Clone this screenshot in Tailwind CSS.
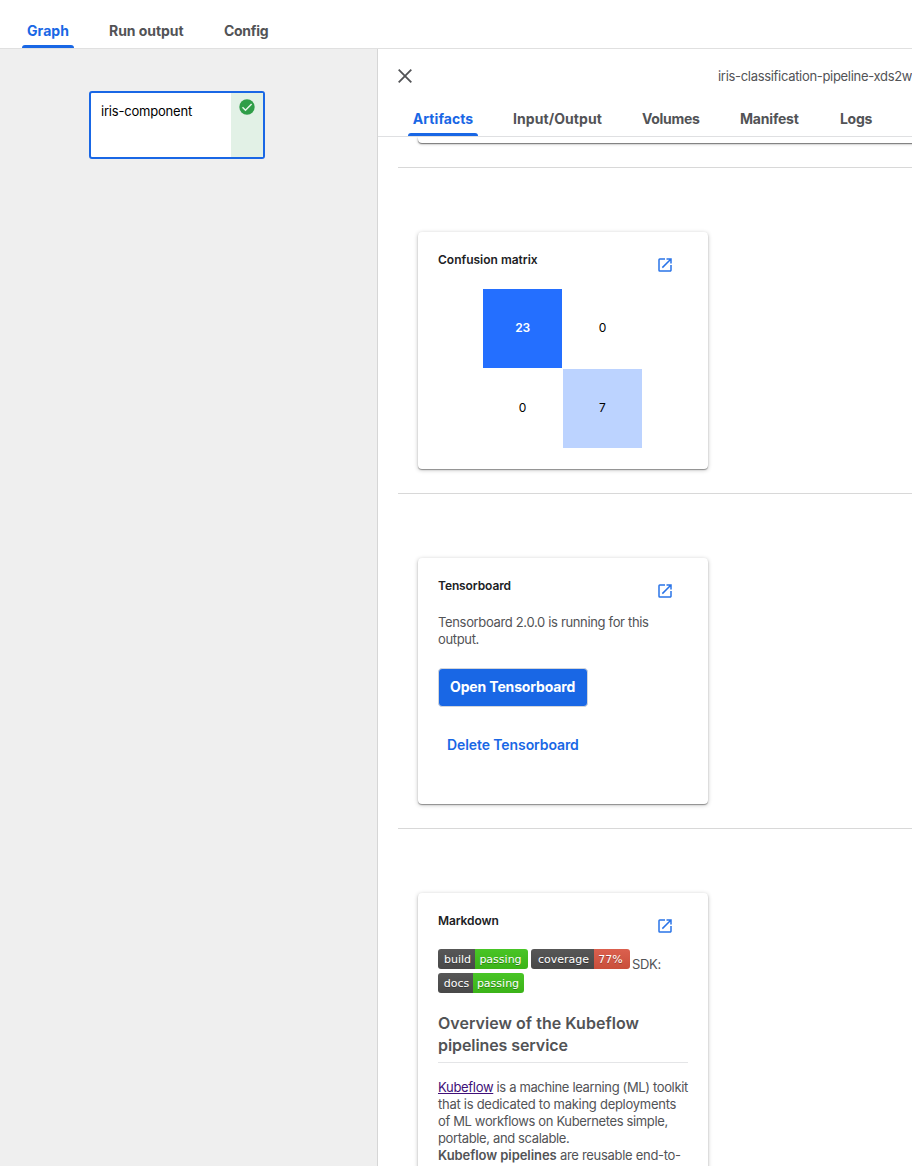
<!DOCTYPE html>
<html lang="en">
<head>
<meta charset="utf-8">
<title>Run details</title>
<script src="https://cdn.jsdelivr.net/npm/@tailwindcss/browser@4"></script>
</head>
<body class="w-[912px] h-[1166px] overflow-hidden bg-white font-['Inter','Liberation_Sans',sans-serif] text-[#525356] whitespace-nowrap flex flex-col">
<svg class="hidden">
  <symbol id="launch" viewBox="0 0 24 24"><path fill="currentColor" d="M19 19H5V5h7V3H5a2 2 0 0 0-2 2v14a2 2 0 0 0 2 2h14c1.1 0 2-.9 2-2v-7h-2v7zM14 3v2h3.59l-9.83 9.83 1.41 1.41L19 6.41V10h2V3h-7z"/></symbol>
</svg>
<header class="h-[49px] shrink-0 border-b border-[#e0e0e0] flex items-end pl-[22px] text-[14px] font-bold">
  <div class="w-[52px] mr-[35px] flex flex-col items-center text-[#1967e5]"><span class="leading-5 mb-1 tracking-[0.05px]">Graph</span><i class="h-[3px] w-full rounded-t-[3px] bg-[#1967e5]"></i></div>
  <div class="w-[75px] mr-10 leading-5 mb-[7px] tracking-[-0.05px]">Run output</div>
  <div class="leading-5 mb-[7px] tracking-[-0.3px]">Config</div>
</header>
<div class="flex flex-1 min-h-0">
  <main class="w-[378px] shrink-0 bg-[#efefef] border-r border-[#d6d6d6] pt-[42px] pl-[89px]">
    <div class="w-[176px] h-[68px] bg-white border-2 border-[#1967e5] rounded-[3px] flex text-black">
      <span class="flex-1 pl-[10px] pt-[9px] text-[13px] leading-[18px] tracking-[-0.2px]">iris-component</span>
      <div class="w-8 bg-[#e2f1e6] pt-[6px] pl-2">
        <svg class="size-4" viewBox="0 0 16 16"><circle cx="8" cy="8" r="7.7" fill="#2f9e48"/><path d="M3.5 8.2l3 3 6.1-6.2" fill="none" stroke="#e6f4ea" stroke-width="1.5"/></svg>
      </div>
    </div>
  </main>
  <aside class="flex-1 min-w-0 flex flex-col overflow-hidden">
    <div class="h-[53px] shrink-0 flex items-center pl-5 pt-px">
      <svg class="w-[14px] h-[14px] shrink-0" viewBox="0 0 14 14"><path d="M.7 .7l12.6 12.6M13.3 .7L.7 13.3" stroke="#525356" stroke-width="1.8"/></svg>
      <span class="ml-[306px] mt-[2px] text-[13px] tracking-[-0.31px]">iris-classification-pipeline-xds2w</span>
    </div>
    <nav class="h-[35px] shrink-0 border-b border-[#dfe0e2] flex items-end pl-[30px] text-[14px] font-bold tracking-[-0.3px]">
      <div class="w-[70px] mr-[35px] flex flex-col items-center text-[#1967e5]"><span class="leading-5 mb-1 tracking-[0.05px]">Artifacts</span><i class="h-[3px] w-full rounded-t-[3px] bg-[#1967e5]"></i></div>
      <div class="w-[90px] mr-[39px] leading-5 mb-[7px] tracking-[0.07px]">Input/Output</div>
      <div class="w-[58px] mr-[40px] leading-5 mb-[7px]">Volumes</div>
      <div class="w-[60px] mr-[40px] leading-5 mb-[7px] tracking-[-0.2px]">Manifest</div>
      <div class="leading-5 mb-[7px]">Logs</div>
    </nav>
    <div class="flex-1 min-h-0 overflow-hidden pl-5">
      <div class="h-[6px] ml-5 -mr-4 rounded-b-[4px] shadow-[0_1px_3px_rgba(0,0,0,0.3),0_1px_1px_rgba(0,0,0,0.4)]"></div>
      <hr class="mt-6 border-[#d8d8d8]">
      <section class="mt-16 ml-5 w-[290px] h-[237px] rounded-[4px] px-5 pt-[18px] shadow-[0_1px_4px_rgba(0,0,0,0.25),0_1px_1px_rgba(0,0,0,0.35)]">
        <div class="flex justify-between pr-[14px] h-[39px] text-[#202124] text-[12px] font-semibold leading-5"><span>Confusion matrix</span><svg class="size-[18px] mt-[6px] text-[#2a74e8]"><use href="#launch"/></svg></div>
        <div class="ml-[45px] grid grid-cols-[79px_79px] grid-rows-[79px_79px] gap-px text-[12px] text-black text-center leading-[78px]">
          <div class="bg-[#246fff] text-white font-semibold tracking-[-0.4px]">23</div><div>0</div><div>0</div><div class="bg-[#bcd3ff]">7</div>
        </div>
      </section>
      <hr class="mt-6 border-[#d8d8d8]">
      <section class="mt-16 ml-5 w-[290px] h-[246px] rounded-[4px] px-5 pt-[18px] shadow-[0_1px_4px_rgba(0,0,0,0.25),0_1px_1px_rgba(0,0,0,0.35)]">
        <div class="flex justify-between pr-[14px] h-[38px] text-[#202124] text-[12px] font-semibold leading-5"><span class="tracking-[-0.1px]">Tensorboard</span><svg class="size-[18px] mt-[6px] text-[#2a74e8]"><use href="#launch"/></svg></div>
        <p class="text-[13px] leading-[17px] tracking-[-0.34px]">Tensorboard 2.0.0 is running for this<br>output.</p>
        <div class="mt-[20px] w-[150px] h-[39px] rounded-[4px] border border-[#d2d5da] bg-[#1967e5] text-white text-[14px] font-bold leading-[36px] pl-[11px] tracking-[-0.14px]">Open Tensorboard</div>
        <div class="mt-[28px] ml-[9px] text-[#1967e5] text-[14px] font-semibold leading-5 tracking-[-0.09px]">Delete Tensorboard</div>
      </section>
      <hr class="mt-6 border-[#d8d8d8]">
      <section class="mt-16 ml-5 w-[290px] h-[400px] rounded-[4px] px-5 pt-[18px] shadow-[0_1px_4px_rgba(0,0,0,0.25),0_1px_1px_rgba(0,0,0,0.35)]">
        <div class="flex justify-between pr-[14px] h-[38px] text-[#202124] text-[12px] font-semibold leading-5"><span class="tracking-[-0.1px]">Markdown</span><svg class="size-[18px] mt-[6px] text-[#2a74e8]"><use href="#launch"/></svg></div>
        <div class="flex h-6 text-white text-[11px] leading-[21px] text-center font-['DejaVu_Sans',sans-serif] [text-shadow:0_1px_0_rgba(0,0,0,0.3)]">
          <div class="flex w-[90px] h-5 rounded-[3px] overflow-hidden mr-[3px]"><span class="w-[37px] pl-[2px] bg-linear-to-b from-[#575757] to-[#484848]">build</span><span class="flex-1 pr-[2px] bg-linear-to-b from-[#49c526] to-[#3bb318]">passing</span></div>
          <div class="flex w-[99px] h-5 rounded-[3px] overflow-hidden mr-[2px]"><span class="w-[63px] pl-[2px] bg-linear-to-b from-[#575757] to-[#484848]">coverage</span><span class="flex-1 pr-[3px] bg-linear-to-b from-[#db604e] to-[#c94f3b]">77%</span></div>
          <span class="text-[#525356] text-[13px] leading-[31px] tracking-[-0.3px] font-['Inter',sans-serif] [text-shadow:none]">SDK:</span>
        </div>
        <div class="flex w-[86px] h-5 text-white text-[11px] leading-[21px] text-center font-['DejaVu_Sans',sans-serif] [text-shadow:0_1px_0_rgba(0,0,0,0.3)] rounded-[3px] overflow-hidden"><span class="w-[35px] pl-[2px] bg-linear-to-b from-[#575757] to-[#484848]">docs</span><span class="flex-1 pr-px bg-linear-to-b from-[#49c526] to-[#3bb318]">passing</span></div>
        <h2 class="mt-[19px] h-[51px] text-[16px] leading-[22px] font-semibold border-b border-[#e4e5e7]"><span class="tracking-[0.04px]">Overview of the Kubeflow</span><br><span class="tracking-[-0.08px]">pipelines service</span></h2>
        <p class="mt-[16px] text-[13px] leading-[17px] tracking-[-0.36px]"><a class="text-[#401078] underline tracking-[-0.3px]">Kubeflow</a> is a machine learning (ML) toolkit<br><span class="tracking-[-0.27px]">that is dedicated to making deployments</span><br>of ML workflows on Kubernetes simple,<br>portable, and scalable.<br><b class="font-semibold tracking-[-0.06px]">Kubeflow pipelines</b> <span class="tracking-[-0.3px]">are reusable end-to-</span></p>
      </section>
    </div>
  </aside>
</div>
</body>
</html>
